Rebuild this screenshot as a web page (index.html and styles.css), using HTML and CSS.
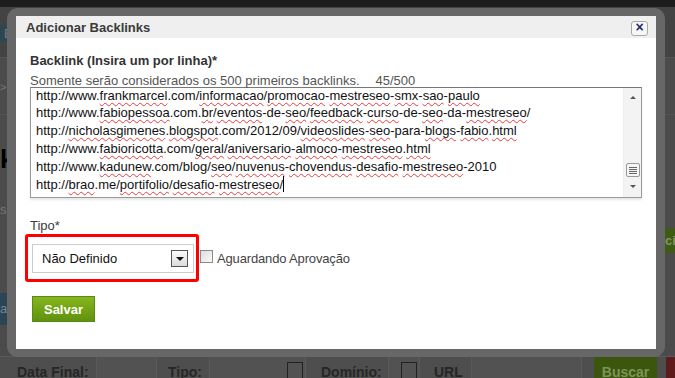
FILE: index.html
```html
<!DOCTYPE html>
<html>
<head>
<meta charset="utf-8">
<title>Adicionar Backlinks</title>
<link rel="stylesheet" href="styles.css">
</head>
<body>
<div id="page">
	<div class="topbar"></div>
	<div class="headrow"><span class="tab">Ec</span></div>
	<div class="crumbrow">&gt;</div>
	<div class="bigrow">k</div>
	<div class="smallrow">s</div>
	<div class="greenrow"><span class="greenbtn">ci</span></div>
	<div class="tealrow"><span class="teal">a</span></div>
	<div class="spacer"></div>
	<div class="filters">
		<span class="cell c1">Data Final:</span>
		<span class="field f1"></span>
		<span class="cell c2">Tipo:</span>
		<span class="field f2"><span class="arr"></span></span>
		<span class="cell c3">Domínio:</span>
		<span class="field f3"><span class="arr"></span></span>
		<span class="cell c4">URL</span>
		<span class="field f4"></span>
		<span class="buscar">Buscar</span>
		<span class="redbtn"></span>
	</div>
</div>

<div id="modal">
	<div class="dialog">
		<div class="titlebar">
			<span>Adicionar Backlinks</span>
			<span class="close">&times;</span>
		</div>
		<div class="dlgbody">
			<div class="label">Backlink (Insira um por linha)*</div>
			<div class="hint">Somente serão considerados os 500 primeiros backlinks.<span class="count">45/500</span></div>
			<div class="links">
				<div class="linktext">
					<div>http://www.<u>frankmarcel</u>.com/<u>informacao</u>/<u>promocao</u>-<u>mestreseo</u>-<u>smx</u>-<u>sao</u>-<u>paulo</u></div>
					<div>http://www.<u>fabiopessoa</u>.com.<u>br</u>/<u>eventos</u>-de-<u>seo</u>/<u>feedback</u>-<u>curso</u>-de-<u>seo</u>-da-<u>mestreseo</u>/</div>
					<div>http://<u>nicholasgimenes</u>.<u>blogspot</u>.com/2012/09/<u>videoslides</u>-<u>seo</u>-para-<u>blogs</u>-<u>fabio</u>.<u>html</u></div>
					<div>http://www.<u>fabioricotta</u>.com/<u>geral</u>/<u>aniversario</u>-<u>almoco</u>-<u>mestreseo</u>.<u>html</u></div>
					<div>http://www.<u>kadunew</u>.com/blog/<u>seo</u>/<u>nuvenus</u>-<u>chovendus</u>-<u>desafio</u>-<u>mestreseo</u>-2010</div>
					<div>http://<u>brao</u>.me/<u>portifolio</u>/<u>desafio</u>-<u>mestreseo</u>/<span class="caret"></span></div>
				</div>
				<div class="scrollbar">
					<span class="up"></span>
					<span class="thumb"><i></i><i></i><i></i><i></i></span>
					<span class="down"></span>
				</div>
			</div>
			<div class="label tipo">Tipo*</div>
			<div class="typerow">
				<div class="mark">
					<div class="select"><span>Não Definido</span><span class="selbtn"></span></div>
				</div>
				<span class="check"></span>
				<span class="checklbl">Aguardando Aprovação</span>
			</div>
			<button type="button" class="save">Salvar</button>
		</div>
	</div>
</div>
</body>
</html>
```

FILE: styles.css
```css
html, body {
	margin: 0;
	padding: 0;
	width: 100%;
	height: 100%;
	overflow: hidden;
}
body {
	font-family: "Liberation Sans", Arial, sans-serif;
	background-color: #4b4b4b;
	position: relative;
}

/* darkened page behind the dialog */
div#page {
	height: 100%;
	display: flex;
	flex-direction: column;
}
.topbar {
	height: 7px;
	background-color: #1d1d1d;
}
.headrow {
	height: 51px;
	border-bottom: 1px solid #555;
	box-sizing: border-box;
	padding-top: 17px;
	background-color: #434343;
}
.tab {
	display: inline-block;
	background-color: #2f4650;
	color: #6e7f87;
	font-size: 13px;
	height: 17px;
	line-height: 17px;
	padding: 0 4px;
}
.crumbrow {
	height: 57px;
	border-bottom: 1px solid #555;
	box-sizing: border-box;
	color: #777;
	font-size: 11px;
	padding-top: 23px;
}
.bigrow {
	height: 60px;
	color: #000;
	font-weight: bold;
	font-size: 26px;
	line-height: 88px;
}
.smallrow {
	height: 50px;
	color: #777;
	font-size: 13px;
	line-height: 70px;
}
.greenrow {
	height: 58px;
	text-align: right;
	padding-top: 3px;
	box-sizing: border-box;
}
.greenbtn {
	display: inline-block;
	background-color: #3e5a14;
	color: #7f9566;
	font-size: 13px;
	font-weight: bold;
	height: 25px;
	line-height: 25px;
	width: 10px;
	overflow: hidden;
}
.tealrow {
	height: 50px;
	padding-top: 10px;
	box-sizing: border-box;
}
.teal {
	display: inline-block;
	background-color: #2a4555;
	color: #75858d;
	font-size: 13px;
	width: 7px;
	height: 32px;
	line-height: 32px;
	overflow: hidden;
}
.spacer {
	flex: 1;
}
.filters {
	height: 21px;
	display: flex;
	align-items: stretch;
	background-color: #4e4e4e;
	border-top: 1px solid #5a5a5a;
}
.cell {
	font-size: 14px;
	font-weight: bold;
	color: #262626;
	line-height: 30px;
	border-right: 1px solid #595959;
	box-sizing: border-box;
	white-space: nowrap;
}
.c1 { width: 97px; padding-left: 17px; }
.c2 { width: 53px; padding-left: 11px; }
.c3 { width: 83px; padding-left: 15px; }
.c4 { width: 52px; padding-left: 14px; }
.field {
	background-color: #525252;
	border-right: 1px solid #595959;
	box-sizing: border-box;
	position: relative;
}
.f1 { width: 60px; }
.f2 { width: 96px; }
.f3 { width: 31px; }
.f4 { width: 110px; }
.arr {
	position: absolute;
	right: 2px;
	top: 5px;
	width: 16px;
	height: 18px;
	border: 1px solid #222;
	box-sizing: border-box;
}
.buscar {
	margin-left: 12px;
	background-color: #3b560d;
	color: #7d9458;
	font-weight: bold;
	font-size: 14px;
	width: 63px;
	text-align: center;
	line-height: 30px;
}
.redbtn {
	margin-left: 9px;
	background-color: #5d1b1b;
	flex: 1;
}

/* dialog */
div#modal {
	position: absolute;
	left: 7px;
	top: 8px;
	width: 658px;
	height: 349px;
	background-color: #676767;
	border-radius: 11px;
	padding: 8px 9px;
	box-sizing: border-box;
}
.dialog {
	background-color: #fff;
	height: 100%;
}
.titlebar {
	height: 22px;
	background-color: #efefef;
	display: flex;
	align-items: center;
	justify-content: space-between;
	padding: 0 8px 0 10px;
	font-size: 13px;
	font-weight: bold;
	color: #3a3a3a;
}
.close {
	width: 17px;
	height: 15px;
	box-sizing: border-box;
	border: 1px solid #a9a9a9;
	border-radius: 3px;
	background-color: #f7f7f7;
	color: #1a2a70;
	font-size: 14px;
	line-height: 11px;
	text-align: center;
	margin-top: 3px;
}
.dlgbody {
	padding: 14px 14px 0 14px;
}
.label {
	font-size: 13px;
	font-weight: bold;
	color: #333;
	line-height: 18px;
}
.hint {
	font-size: 13px;
	color: #555;
	margin-top: 4px;
	line-height: 13px;
}
.count {
	margin-left: 16px;
}
.links {
	height: 111px;
	border: 1px solid #9a9a9a;
	border-top-color: #777;
	box-sizing: border-box;
	display: flex;
	box-shadow: 0 2px 2px #e6e6e6;
	background-color: #fff;
}
.linktext {
	flex: 1;
	padding-left: 5px;
	font-size: 13px;
	line-height: 18px;
	color: #111;
	white-space: nowrap;
	overflow: hidden;
}
.linktext div:first-child {
	line-height: 16px;
}
.linktext u {
	text-decoration: underline wavy #e43c3c;
	text-decoration-thickness: 1px;
	text-underline-offset: 2px;
	text-decoration-skip-ink: none;
}
.caret {
	display: inline-block;
	width: 1px;
	height: 16px;
	background-color: #000;
	vertical-align: -3px;
}
.scrollbar {
	width: 17px;
	background-color: #f3f3f3;
	border-left: 1px solid #eee;
	display: flex;
	flex-direction: column;
	align-items: center;
}
.up, .down {
	width: 0;
	height: 0;
	border-left: 3px solid transparent;
	border-right: 3px solid transparent;
}
.up {
	border-bottom: 3px solid #555;
	margin-top: 8px;
}
.down {
	border-top: 3px solid #555;
	margin-top: 8px;
}
.thumb {
	margin-top: 64px;
	width: 14px;
	height: 14px;
	box-sizing: border-box;
	border: 1px solid #999;
	border-radius: 2px;
	background-color: #f5f5f5;
	display: flex;
	flex-direction: column;
	align-items: center;
	justify-content: center;
	gap: 1px;
}
.thumb i {
	display: block;
	width: 8px;
	height: 1px;
	background-color: #666;
}
.label.tipo {
	font-weight: normal;
	color: #3c3c3c;
	margin-top: 19px;
}
.typerow {
	display: flex;
	align-items: center;
	margin-top: -1px;
	margin-left: -5px;
}
.mark {
	border: 3px solid #f00;
	border-radius: 3px;
	padding: 7px 2px 6px 4px;
}
.select {
	width: 162px;
	height: 29px;
	box-sizing: border-box;
	border: 1px solid #ccc;
	display: flex;
	align-items: center;
	justify-content: space-between;
	padding: 0 5px 0 9px;
	font-size: 13px;
	color: #111;
}
.selbtn {
	width: 17px;
	height: 17px;
	box-sizing: border-box;
	border: 1px solid #555;
	background: linear-gradient(#fafafa, #dcdcdc);
	position: relative;
}
.selbtn::after {
	content: "";
	position: absolute;
	left: 4px;
	top: 6px;
	border-left: 4px solid transparent;
	border-right: 4px solid transparent;
	border-top: 4px solid #111;
}
.check {
	width: 13px;
	height: 13px;
	box-sizing: border-box;
	border: 1px solid #8a8a8a;
	background: linear-gradient(135deg, #dcdcdc, #fafafa);
	margin-left: 1px;
	margin-top: -4px;
}
.checklbl {
	font-size: 13px;
	color: #444;
	margin-left: 4px;
	letter-spacing: -0.15px;
}
button.save {
	display: block;
	margin-top: 14px;
	margin-left: 2px;
	width: 63px;
	height: 26px;
	border: 1px solid #5a8a10;
	background: linear-gradient(#86b61e, #5f920e);
	color: #fff;
	font-family: "Liberation Sans", Arial, sans-serif;
	font-weight: bold;
	font-size: 13px;
	padding: 0;
}
```
